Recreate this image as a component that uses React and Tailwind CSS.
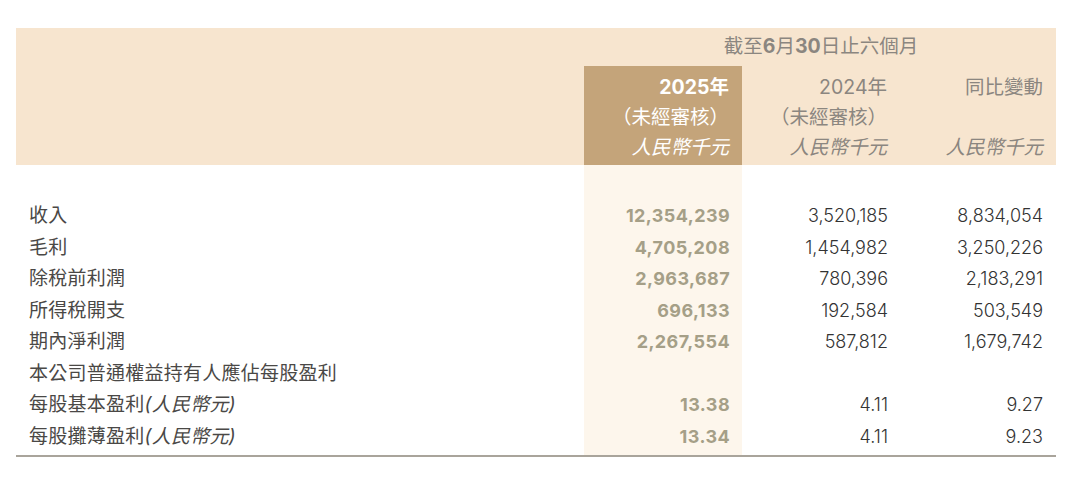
import React from "react";

const rows = [
  { label: "收入", a: "12,354,239", b: "3,520,185", c: "8,834,054" },
  { label: "毛利", a: "4,705,208", b: "1,454,982", c: "3,250,226" },
  { label: "除稅前利潤", a: "2,963,687", b: "780,396", c: "2,183,291" },
  { label: "所得稅開支", a: "696,133", b: "192,584", c: "503,549" },
  { label: "期內淨利潤", a: "2,267,554", b: "587,812", c: "1,679,742" },
  { label: "本公司普通權益持有人應佔每股盈利", a: "", b: "", c: "" },
  { label: "每股基本盈利", unit: true, a: "13.38", b: "4.11", c: "9.27" },
  { label: "每股攤薄盈利", unit: true, a: "13.34", b: "4.11", c: "9.23" },
];

const cjk = "font-['Inter','Noto_Sans_CJK_TC',sans-serif]";

export default function App() {
  return (
    <div className={`min-h-screen bg-white pt-[28px] pl-[16px] ${cjk}`}>
      <div className="w-[1040px]">
        {/* Header band */}
        <div className="grid grid-cols-[568px_158px_158px_156px] bg-[#f7e5cf] text-[19.5px] text-[#8b8680]">
          <div className="col-start-2 col-span-3 h-[38px] flex items-center justify-center pl-[2px]">
            截至<span className="font-bold">6</span>月<span className="font-bold">30</span>日止六個月
          </div>
          <div className="col-start-1"></div>
          <div className="bg-[#c4a47a] text-white text-right pr-[13px] pt-[6px] pb-[3px] leading-[30px]">
            <div className="font-bold">2025年</div>
            <div>（未經審核）</div>
            <div className="italic">人民幣千元</div>
          </div>
          <div className="text-right pr-[13px] pt-[6px] pb-[3px] leading-[30px]">
            <div>2024年</div>
            <div>（未經審核）</div>
            <div className="italic">人民幣千元</div>
          </div>
          <div className="text-right pr-[13px] pt-[6px] pb-[3px] leading-[30px]">
            <div>同比變動</div>
            <div>&nbsp;</div>
            <div className="italic">人民幣千元</div>
          </div>
        </div>

        {/* Body */}
        <div className="grid grid-cols-[568px_158px_158px_156px] text-[18px]">
          <div className="h-[35px]"></div>
          <div className="h-[35px] bg-[#fdf6ec]"></div>
          <div></div>
          <div></div>
          {rows.map((r) => (
            <React.Fragment key={r.label}>
              <div className="h-[31.5px] leading-[31.5px] pl-[13px] text-[19px] text-[#4a4846] tracking-[0.25px]">
                {r.label}
                {r.unit && <span className="italic">(人民幣元)</span>}
              </div>
              <div className="h-[31.5px] leading-[31.5px] bg-[#fdf6ec] text-right pr-[12px] font-bold text-[#a59f87] tracking-[0.4px]">
                {r.a}
              </div>
              <div className="h-[31.5px] leading-[31.5px] text-right pr-[12px] font-light text-[#333333]">
                {r.b}
              </div>
              <div className="h-[31.5px] leading-[31.5px] text-right pr-[13px] font-light text-[#333333]">
                {r.c}
              </div>
            </React.Fragment>
          ))}
          <div className="h-[3px]"></div>
          <div className="h-[3px] bg-[#fdf6ec]"></div>
          <div></div>
          <div></div>
        </div>
        <div className="h-[2px] bg-[#a9a49b]"></div>
      </div>
    </div>
  );
}
